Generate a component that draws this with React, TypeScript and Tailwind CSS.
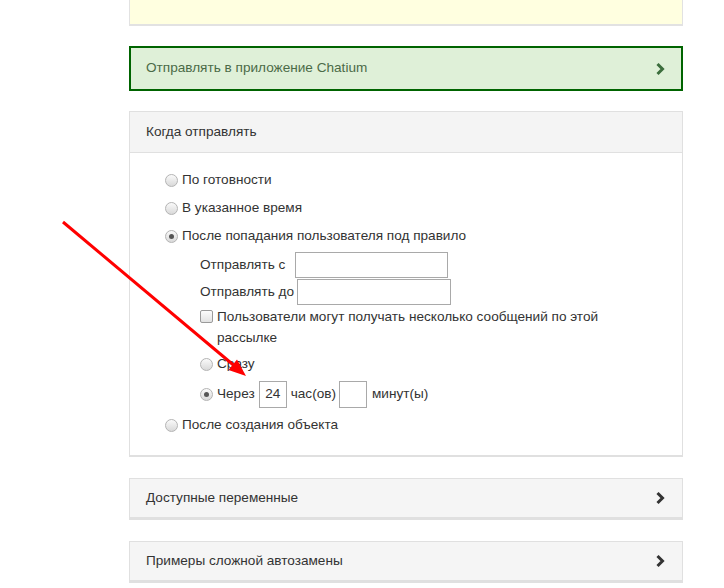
import React from "react";

function Chevron({ color }: { color: string }) {
    return (
        <svg width="10" height="14" viewBox="0 0 10 14" className="shrink-0">
            <polyline points="2.5,2 7.5,7 2.5,12" fill="none" stroke={color} strokeWidth="3" strokeLinecap="butt" strokeLinejoin="miter" />
        </svg>
    );
}

function Radio({ checked = false }: { checked?: boolean }) {
    return (
        <span className="relative mr-[4px] inline-flex size-[13px] shrink-0 items-center justify-center rounded-full border border-[#b4b4b4] bg-gradient-to-b from-[#fafafa] to-[#d9d9d9]">
            {checked && <span className="size-[5px] rounded-full bg-[#555]" />}
        </span>
    );
}

function CollapsedCard({ title }: { title: string }) {
    return (
        <div className="mt-[21px] flex h-[42px] items-center justify-between border border-b-[3px] border-[#e0e0e0] bg-[#f5f5f5] pl-[16px] pr-[17px]">
            <span className="text-[#333]">{title}</span>
            <Chevron color="#333" />
        </div>
    );
}

export default function App() {
    return (
        <div
            className="relative h-[588px] w-[724px] overflow-hidden bg-white text-[13.6px] text-[#333]"
            style={{ fontFamily: '"Liberation Sans", Arial, sans-serif' }}
        >
            <div className="ml-[129px] w-[554px]">
                {/* жёлтый блок сверху */}
                <div className="h-[26px] border-x border-b-2 border-[#e2e2e2] bg-[#ffffe0]" />

                {/* Chatium */}
                <div className="mt-[20px] flex h-[45px] items-center justify-between border-2 border-[#006400] bg-[#dff0d8] pl-[15px] pr-[16px]">
                    <span className="text-[#4b6b47]">Отправлять в приложение Chatium</span>
                    <Chevron color="#3c6e3d" />
                </div>

                {/* Когда отправлять */}
                <div className="mt-[20px] border border-b-2 border-[#e0e0e0]">
                    <div className="flex h-[41px] items-center border-b border-[#e0e0e0] bg-[#f4f4f4] pl-[16px]">
                        Когда отправлять
                    </div>
                    <div className="pb-[16px] pl-[35px] pt-[13px]">
                        <div className="flex h-[28px] items-center">
                            <Radio />
                            По готовности
                        </div>
                        <div className="flex h-[28px] items-center">
                            <Radio />
                            В указанное время
                        </div>
                        <div className="flex h-[28px] items-center">
                            <Radio checked />
                            После попадания пользователя под правило
                        </div>

                        <div className="pl-[35px]">
                            <div className="mt-[2px] flex h-[26px] items-center">
                                <span className="mr-[10px]">Отправлять с</span>
                                <span className="h-[26px] w-[153px] border border-[#a9a9a9]" />
                            </div>
                            <div className="mt-[1px] flex h-[26px] items-center">
                                <span className="mr-[3px]">Отправлять до</span>
                                <span className="h-[26px] w-[154px] border border-[#a9a9a9]" />
                            </div>
                            <div className="flex w-[420px] pt-[1px] leading-[21px]">
                                <span className="mr-[4px] mt-[4px] size-[13px] shrink-0 rounded-[2px] border border-[#9a9a9a] bg-gradient-to-b from-[#fcfcfc] to-[#e2e2e2]" />
                                <span>Пользователи могут получать несколько сообщений по этой рассылке</span>
                            </div>
                            <div className="mt-[2px] flex h-[28px] items-center">
                                <Radio />
                                Сразу
                            </div>
                            <div className="mt-[1px] flex h-[31px] items-center">
                                <Radio checked />
                                <span className="mr-[4px]">Через</span>
                                <span className="flex h-[27px] w-[28px] items-center justify-center border border-[#a9a9a9]">24</span>
                                <span className="ml-[4px] mr-[3px]">час(ов)</span>
                                <span className="h-[27px] w-[28px] border border-[#a9a9a9]" />
                                <span className="ml-[5px]">минут(ы)</span>
                            </div>
                        </div>

                        <div className="mt-[1px] flex h-[28px] items-center">
                            <Radio />
                            После создания объекта
                        </div>
                    </div>
                </div>

                <CollapsedCard title="Доступные переменные" />
                <CollapsedCard title="Примеры сложной автозамены" />
            </div>

            {/* стрелка */}
            <svg className="pointer-events-none absolute left-0 top-0" width="724" height="588">
                <line x1="63" y1="222" x2="234" y2="365.5" stroke="#ff0000" strokeWidth="3" />
                <polygon points="228.5,370 237,359.5 246,376" fill="#ff0000" />
            </svg>
        </div>
    );
}
